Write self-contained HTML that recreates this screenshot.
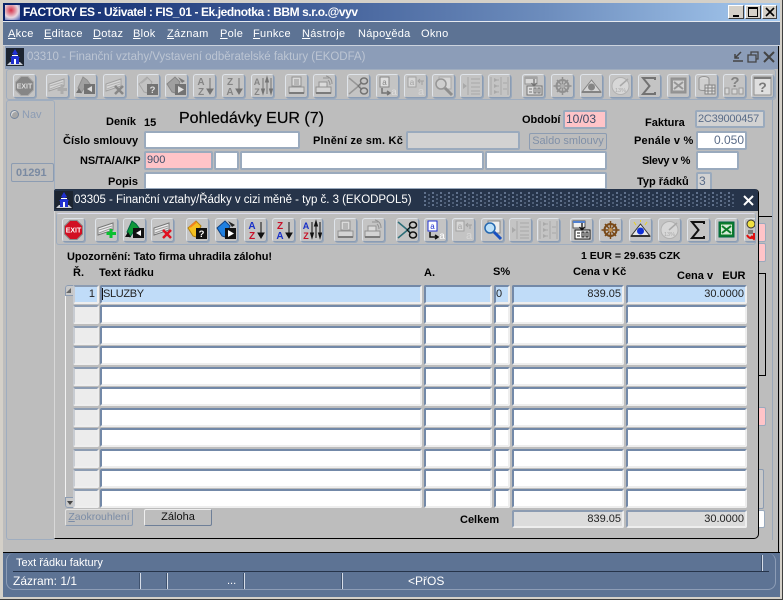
<!DOCTYPE html>
<html lang="cs">
<head>
<meta charset="utf-8">
<title>FACTORY ES</title>
<style>
html,body{margin:0;padding:0;width:783px;height:600px;overflow:hidden;background:#d4d0c8}
body{position:relative;font-family:"Liberation Sans",sans-serif;font-size:11px;color:#000}
div,span{box-sizing:border-box}
.a{position:absolute}
.t{position:absolute;white-space:nowrap;line-height:14px;height:14px}
.b{font-weight:bold}
.f{position:absolute;background:#fff;border:2px solid #9aaabd;border-radius:2px;color:#3c4c68;line-height:14px;font-size:12px;padding-left:1px;white-space:nowrap;overflow:hidden}
.d{background:#d2d2d2}
.p{background:#ffc4c8}
.btn{position:absolute;width:23px;height:24px;border:1px solid #8a9cb4;border-top-color:#dfe4ea;border-left-color:#dfe4ea;border-radius:3px;background:#c4c4c4;box-shadow:1px 1px 0 #9aa8ba}
.btn svg{position:absolute;left:0;top:0;width:21px;height:22px}
.off svg,.up svg{filter:grayscale(1) opacity(.45)}
.r{position:absolute;left:0;width:783px;height:19px}
.c{position:absolute;top:0;height:19px;background:#fff;border-top:2px solid #7389a8;border-left:2px solid #7389a8;border-right:2px solid #eee;border-bottom:2px solid #eee;border-radius:2px;font-size:11px;line-height:15px;color:#222;white-space:nowrap;overflow:hidden}
.c1{left:73px;width:26px;background:#ececec;border-top-color:#8c9cb2;border-left-color:#c8ccd2}
.c2{left:100px;width:322px}
.c3{left:424px;width:68px}
.c4{left:494px;width:16px}
.c5{left:512px;width:112px;text-align:right;padding-right:1px}
.c6{left:626px;width:121px;text-align:right;padding-right:1px}
.s .c{background:#c0dcf8}
.win{position:absolute;top:5px;width:16px;height:14px;background:#d4d0c8;border:1px solid;border-color:#fff #404040 #404040 #fff}
.sep{position:absolute;width:1px;top:573px;height:16px;background:#d6dde8;box-shadow:-1px 0 0 #3f526e}
</style>
</head>
<body>
<svg width="0" height="0" style="position:absolute">
<defs>
<symbol id="bld" viewBox="0 0 18 18"><rect width="18" height="18" fill="#1c2430"/><path d="M1 17 L4 14 H14 L17 17Z" fill="#c8ccd4"/><path d="M9 1 L12 6 H6Z" fill="#2030d0"/><path d="M9 5 L14 10 H4Z" fill="#2030d0"/><rect x="5" y="10" width="8" height="6" fill="#2030d0"/><rect x="8" y="11" width="2" height="5" fill="#fff"/><path d="M6 7.500 H12" stroke="#fff"/></symbol>
<symbol id="exit" viewBox="0 0 21 22"><path d="M7 1.500 H14 L19.500 7 V15 L14 20.500 H7 L1.500 15 V7Z" fill="#d20f22" stroke="#8a8a8a"/><text x="10.500" y="13.500" font-family="Liberation Sans" font-size="7" font-weight="bold" fill="#fff" text-anchor="middle">EXIT</text></symbol>
<symbol id="rib" viewBox="0 0 21 22"><path d="M2 9 L17 4 V11 L2 16Z" fill="#eee" stroke="#777"/><path d="M3 11 L16 7 M3 14 L16 9" stroke="#999"/></symbol>
<symbol id="add" viewBox="0 0 21 22"><use href="#rib"/><path d="M15 10 V19 M10.500 14.500 H20" stroke="#0ac030" stroke-width="3"/></symbol>
<symbol id="del" viewBox="0 0 21 22"><use href="#rib"/><path d="M11 11 L19 19 M19 11 L11 19" stroke="#e01020" stroke-width="2.500"/></symbol>
<symbol id="grn" viewBox="0 0 21 22"><path d="M3 13 L8 2 L12 5 L15 9 L10 12 L6 18Z" fill="#109838" stroke="#064"/><rect x="9" y="9" width="11" height="10" fill="#111"/><path d="M17 11 V17 L12 14Z" fill="#fff"/><path d="M1 18 H7 L4 13Z" fill="#111"/></symbol>
<symbol id="qry" viewBox="0 0 21 22"><path d="M1 9 L9 2 L14 7 L9 18 L6 17Z" fill="#f4c020" stroke="#b08010"/><path d="M3 8 L9 3" stroke="#f08020" stroke-width="2"/><rect x="9" y="9" width="11" height="11" fill="#111"/><text x="14.500" y="18" font-family="Liberation Sans" font-size="9.500" font-weight="bold" fill="#fff" text-anchor="middle">?</text></symbol>
<symbol id="run" viewBox="0 0 21 22"><path d="M1 9 L9 2 L14 7 L9 18 L6 17Z" fill="#2080e0" stroke="#104080"/><path d="M12 2 L19 6 L16 8Z" fill="#222"/><rect x="9" y="9" width="11" height="11" fill="#111"/><path d="M12 11 V18 L18 14.500Z" fill="#fff"/></symbol>
<symbol id="az" viewBox="0 0 21 22"><text x="7" y="10" font-family="Liberation Sans" font-size="10" font-weight="bold" fill="#1830c8" text-anchor="middle">A</text><text x="7" y="20" font-family="Liberation Sans" font-size="10" font-weight="bold" fill="#c81028" text-anchor="middle">Z</text><path d="M16 3 V16 M13 14 L16 19 L19 14Z" stroke="#111" fill="#111"/></symbol>
<symbol id="za" viewBox="0 0 21 22"><text x="7" y="10" font-family="Liberation Sans" font-size="10" font-weight="bold" fill="#c81028" text-anchor="middle">Z</text><text x="7" y="20" font-family="Liberation Sans" font-size="10" font-weight="bold" fill="#1830c8" text-anchor="middle">A</text><path d="M16 3 V16 M13 14 L16 19 L19 14Z" stroke="#111" fill="#111"/></symbol>
<symbol id="azz" viewBox="0 0 21 22"><text x="5" y="10" font-family="Liberation Sans" font-size="9" font-weight="bold" fill="#1830c8" text-anchor="middle">A</text><text x="5" y="20" font-family="Liberation Sans" font-size="9" font-weight="bold" fill="#c81028" text-anchor="middle">Z</text><path d="M11 3 V16 M15 6 V19 M19 3 V16 M9.500 14 L11 19 L12.500 14Z M13.500 7 L15 2 L16.500 7Z M17.500 14 L19 19 L20.500 14Z" stroke="#111" fill="#111"/></symbol>
<symbol id="pr" viewBox="0 0 21 22"><path d="M6 2 H15 V11 H6Z" fill="#f4f4f4" stroke="#555"/><path d="M8 5 H13 M8 7 H13 M8 9 H13" stroke="#555"/><path d="M3 12 H18 V18 H3Z" fill="#e8e8e8" stroke="#555"/><path d="M3 18 H18" stroke="#222" stroke-width="2"/></symbol>
<symbol id="pr2" viewBox="0 0 21 22"><path d="M5 7 H13 V12 H5Z" fill="#f4f4f4" stroke="#555"/><path d="M9 3 L15 3 M12 1 C16 2 18 5 18 9 M14 5 C15 6 16 8 16 10" stroke="#555" fill="none"/><path d="M2 12 H17 V18 H2Z" fill="#e8e8e8" stroke="#555"/><path d="M2 18 H17" stroke="#222" stroke-width="2"/></symbol>
<symbol id="cut" viewBox="0 0 21 22"><path d="M1 3 L13 13 M1 19 L13 9" stroke="#2c6e78" stroke-width="1.500" fill="none"/><ellipse cx="16" cy="6" rx="3.500" ry="3" fill="none" stroke="#111" stroke-width="1.500"/><ellipse cx="16" cy="16" rx="3.500" ry="3" fill="none" stroke="#111" stroke-width="1.500"/><path d="M13 8 L10 11 L13 14" stroke="#111" fill="none"/></symbol>
<symbol id="cp" viewBox="0 0 21 22"><rect x="3" y="2" width="9" height="10" fill="#fff" stroke="#2030d0"/><text x="7.500" y="10" font-family="Liberation Sans" font-size="8" fill="#2030d0" text-anchor="middle">a</text><path d="M5 13 V18 H12 M10 16 L13 18 L10 20" stroke="#111" stroke-width="1.500" fill="none"/><text x="17" y="20" font-family="Liberation Sans" font-size="10" fill="#fff" text-anchor="middle">a</text></symbol>
<symbol id="pa" viewBox="0 0 21 22"><rect x="3" y="2" width="8" height="10" fill="#eee" stroke="#777"/><text x="7" y="10" font-family="Liberation Sans" font-size="8" fill="#777" text-anchor="middle">a</text><path d="M13 6 H19 M15 4 L13 6 L15 8 M17 6 V10" stroke="#777" fill="none"/><text x="16" y="20" font-family="Liberation Sans" font-size="11" fill="#eee" text-anchor="middle">a</text></symbol>
<symbol id="fnd" viewBox="0 0 21 22"><path d="M6 2 H18 V14 H6Z" fill="#eee" stroke="#888"/><circle cx="8" cy="9" r="5" fill="#bde0f8" stroke="#2468b0" stroke-width="1.500"/><path d="M12 13 L19 20" stroke="#1850c0" stroke-width="3"/></symbol>
<symbol id="l1" viewBox="0 0 21 22"><path d="M7 2 V20" stroke="#888"/><path d="M10 4 H19 M10 8 H19 M10 12 H19 M10 16 H19 M10 19 H19" stroke="#888"/><path d="M2 8 L6 11 L2 14Z" fill="#888"/></symbol>
<symbol id="l2" viewBox="0 0 21 22"><path d="M2 2 V20 M12 2 V20 M19 2 V20" stroke="#888"/><path d="M5 5 H10 M5 11 H10 M5 17 H10 M14 8 H18 M14 14 H18" stroke="#888"/><path d="M5 3 L9 5 L5 7Z M5 9 L9 11 L5 13Z M5 15 L9 17 L5 19Z" fill="#888"/></symbol>
<symbol id="frm" viewBox="0 0 21 22"><rect x="2" y="2" width="12" height="7" fill="#f0f0f0" stroke="#555"/><path d="M2 3 H14" stroke="#5080d0" stroke-width="2"/><rect x="4" y="11" width="15" height="9" fill="#fff" stroke="#111"/><path d="M6 14 H9 M6 17 H9 M11 13 H13 V18 H11Z M15 13 H17 V18 H15Z" stroke="#111" fill="none"/><path d="M11 4 V10 M8.500 8 L11 11 L13.500 8" stroke="#111" fill="none" stroke-width="1.300"/></symbol>
<symbol id="wh" viewBox="0 0 21 22"><circle cx="10.500" cy="11" r="6" fill="none" stroke="#7a4a18" stroke-width="2"/><path d="M10.500 2 V20 M1.500 11 H19.500 M5 5 L16 17 M16 5 L5 17" stroke="#7a4a18" stroke-width="1.500"/><circle cx="10.500" cy="11" r="2" fill="#c09050"/></symbol>
<symbol id="eye" viewBox="0 0 21 22"><path d="M1 17 L10.500 5 L20 17Z" fill="#e8e8e8" stroke="#333"/><path d="M4 3 L6 6 M17 3 L15 6 M10.500 1 V3" stroke="#e8d020"/><circle cx="10.500" cy="12" r="3.500" fill="#1030d8"/><path d="M1 17 H20" stroke="#333" stroke-width="2"/></symbol>
<symbol id="dial" viewBox="0 0 21 22"><circle cx="10.500" cy="11" r="8.500" fill="#eee" stroke="#999"/><path d="M10 11 L18 4" stroke="#888" stroke-width="1.500"/><text x="10.500" y="17" font-family="Liberation Sans" font-size="5.500" fill="#888" text-anchor="middle">13%</text></symbol>
<symbol id="sig" viewBox="0 0 21 22"><path d="M16 5 V3 H4 L10.500 11 L4 19 H16 V17" fill="none" stroke="#111" stroke-width="2"/></symbol>
<symbol id="xl" viewBox="0 0 21 22"><rect x="3" y="3" width="15" height="15" fill="#0c7c28" stroke="#064"/><rect x="5" y="5.500" width="11" height="10" fill="#d8ecd8"/><path d="M6 7 L15 14 M15 7 L6 14" stroke="#0c7c28" stroke-width="2"/></symbol>
<symbol id="pers" viewBox="0 0 21 22"><circle cx="6" cy="5" r="4" fill="#f0e040" stroke="#333"/><path d="M3 12 H8 M3 14 H8" stroke="#333"/><path d="M2 16 C4 20 8 20 9 16 M9 14 V19 M6 17 L9 20 L11 17" stroke="#e01010" stroke-width="2" fill="none"/></symbol>
<symbol id="db" viewBox="0 0 21 22"><ellipse cx="8" cy="4" rx="5" ry="2.500" fill="#eee" stroke="#555"/><path d="M3 4 V14 C3 16 13 16 13 14 V4" fill="#ddd" stroke="#555"/><rect x="9" y="10" width="10" height="9" fill="#fff" stroke="#333"/><path d="M9 13 H19 M9 16 H19 M12 10 V19 M16 10 V19" stroke="#333"/></symbol>
<symbol id="qb" viewBox="0 0 21 22"><text x="11" y="12" font-family="Liberation Sans" font-size="15" font-weight="bold" fill="#333" text-anchor="middle">?</text><rect x="1" y="13" width="4" height="6" fill="#eee" stroke="#666"/><rect x="8" y="14" width="5" height="5" fill="#eee" stroke="#666"/><rect x="15" y="13" width="4" height="6" fill="#eee" stroke="#666"/></symbol>
<symbol id="hlp" viewBox="0 0 21 22"><rect x="2" y="2" width="17" height="18" fill="#fff" stroke="#555"/><path d="M2 3 H19" stroke="#222" stroke-width="2"/><text x="10.500" y="17" font-family="Liberation Sans" font-size="14" font-weight="bold" fill="#222" text-anchor="middle">?</text></symbol>
</defs>
</svg>

<!-- title bar -->
<div class="a" style="left:3px;top:3px;width:777px;height:18px;background:linear-gradient(90deg,#0a246a,#6d8dbd 70%,#a6caf0)"></div>
<div class="a" style="left:5px;top:5px;width:15px;height:15px;background:radial-gradient(circle at 40% 35%,#d83048,#e8d8e0 55%,#3858b0)"></div>
<div class="t b" style="left:23px;top:5px;color:#fff;font-size:12px;letter-spacing:-.42px">FACTORY ES - Uživatel : FIS_01 - Ek.jednotka : BBM s.r.o.@vyv</div>
<div class="win" style="left:728px;"><div class="a" style="left:4px;top:9px;width:6px;height:2px;background:#000"></div></div>
<div class="win" style="left:745px;"><div class="a" style="left:2px;top:1px;width:10px;height:10px;border:1px solid #000;border-top-width:2px"></div></div>
<div class="win" style="left:762px;width:15px"><svg class="a" style="left:2px;top:1px" width="10" height="10"><path d="M1 1 L9 9 M9 1 L1 9" stroke="#000" stroke-width="1.600"/></svg></div>

<!-- menu -->
<div class="a" style="left:3px;top:21px;width:777px;height:25px;background:#5d7394;border-top:1px solid #e6eaf0;border-bottom:1px solid #ccd3de"></div>
<div class="t" style="left:8px;top:27px;color:#fff;font-size:11px;letter-spacing:.3px"><u>A</u>kce</div>
<div class="t" style="left:44px;top:27px;color:#fff;font-size:11px;letter-spacing:.3px"><u>E</u>ditace</div>
<div class="t" style="left:93px;top:27px;color:#fff;font-size:11px;letter-spacing:.3px"><u>D</u>otaz</div>
<div class="t" style="left:133px;top:27px;color:#fff;font-size:11px;letter-spacing:.3px"><u>B</u>lok</div>
<div class="t" style="left:167px;top:27px;color:#fff;font-size:11px;letter-spacing:.3px"><u>Z</u>áznam</div>
<div class="t" style="left:220px;top:27px;color:#fff;font-size:11px;letter-spacing:.3px"><u>P</u>ole</div>
<div class="t" style="left:253px;top:27px;color:#fff;font-size:11px;letter-spacing:.3px"><u>F</u>unkce</div>
<div class="t" style="left:302px;top:27px;color:#fff;font-size:11px;letter-spacing:.3px"><u>N</u>ástroje</div>
<div class="t" style="left:358px;top:27px;color:#fff;font-size:11px;letter-spacing:.3px">Nápo<u>v</u>ěda</div>
<div class="t" style="left:421px;top:27px;color:#fff;font-size:11px;letter-spacing:.3px">Okno</div>

<!-- main area -->
<div class="a" style="left:3px;top:46px;width:777px;height:507px;background:#bdbdbd"></div>
<div class="a" style="left:5px;top:46px;width:773px;height:23px;background:#8c9db8"></div>
<svg class="a" style="left:6px;top:48px" width="18" height="18"><use href="#bld"/></svg>
<div class="t" style="left:27px;top:50px;color:#bcc5d3;font-size:11.500px;letter-spacing:-.03px">03310 - Finanční vztahy/Vystavení odběratelské faktury (EKODFA)</div>
<svg class="a" style="left:731px;top:50px" width="46" height="14"><path d="M2 11 H12 M10 2 L4 8 M4 4 V8 H8" stroke="#444" stroke-width="1.500" fill="none"/><path d="M17 5 H25 V12 H17Z M20 5 V2 H27 V9 H25" stroke="#444" fill="none" stroke-width="1.300"/><path d="M33 2 L43 12 M43 2 L33 12" stroke="#444" stroke-width="2"/></svg>
<div class="a" style="left:778px;top:46px;width:1px;height:507px;background:#000"></div>
<div class="a" style="left:772px;top:100px;width:1px;height:440px;background:#9aa8ba"></div>

<!-- upper toolbar -->
<div class="a" style="left:6px;top:69px;width:770px;height:31px;border:1px solid #9fadbf;border-radius:3px"></div>
<div class="btn up" style="left:13px;top:74px"><svg><use href="#exit"/></svg></div>
<div class="btn up" style="left:46px;top:74px"><svg><use href="#add"/></svg></div>
<div class="btn up" style="left:74px;top:74px"><svg><use href="#grn"/></svg></div>
<div class="btn up" style="left:103px;top:74px"><svg><use href="#del"/></svg></div>
<div class="btn up" style="left:137px;top:74px"><svg><use href="#qry"/></svg></div>
<div class="btn up" style="left:165px;top:74px"><svg><use href="#run"/></svg></div>
<div class="btn up" style="left:193px;top:74px"><svg><use href="#az"/></svg></div>
<div class="btn up" style="left:222px;top:74px"><svg><use href="#za"/></svg></div>
<div class="btn up" style="left:251px;top:74px"><svg><use href="#azz"/></svg></div>
<div class="btn up" style="left:285px;top:74px"><svg><use href="#pr"/></svg></div>
<div class="btn up" style="left:313px;top:74px"><svg><use href="#pr2"/></svg></div>
<div class="btn up" style="left:347px;top:74px"><svg><use href="#cut"/></svg></div>
<div class="btn up" style="left:376px;top:74px"><svg><use href="#cp"/></svg></div>
<div class="btn up" style="left:404px;top:74px"><svg><use href="#pa"/></svg></div>
<div class="btn up" style="left:432px;top:74px"><svg><use href="#fnd"/></svg></div>
<div class="btn up" style="left:460px;top:74px"><svg><use href="#l1"/></svg></div>
<div class="btn up" style="left:488px;top:74px"><svg><use href="#l2"/></svg></div>
<div class="btn up" style="left:522px;top:74px"><svg><use href="#frm"/></svg></div>
<div class="btn up" style="left:551px;top:74px"><svg><use href="#wh"/></svg></div>
<div class="btn up" style="left:580px;top:74px"><svg><use href="#eye"/></svg></div>
<div class="btn up" style="left:609px;top:74px"><svg><use href="#dial"/></svg></div>
<div class="btn up" style="left:638px;top:74px"><svg><use href="#sig"/></svg></div>
<div class="btn up" style="left:667px;top:74px"><svg><use href="#xl"/></svg></div>
<div class="btn up" style="left:695px;top:74px"><svg><use href="#db"/></svg></div>
<div class="btn up" style="left:723px;top:74px"><svg><use href="#qb"/></svg></div>
<div class="btn up" style="left:751px;top:74px"><svg><use href="#hlp"/></svg></div>

<!-- nav panel -->
<div class="a" style="left:6px;top:100px;width:49px;height:440px;border:1px solid #9fadbf;border-radius:3px"></div>
<div class="a" style="left:10px;top:110px;width:9px;height:9px;border-radius:50%;background:#a6a6a6;border:1px solid #74859c;box-shadow:inset 1px 1px 0 #ddd"></div>
<div class="t" style="left:22px;top:108px;color:#8c9cb4;font-size:11px">Nav</div>
<div class="a" style="left:11px;top:163px;width:43px;height:19px;border:1px solid #8c9cb2;border-radius:2px"></div>
<div class="t b" style="left:16px;top:166px;color:#7a8aa2;font-size:11px">01291</div>

<!-- upper form -->
<div class="t b" style="left:106px;top:115px">Deník</div>
<div class="t b" style="left:144px;top:116px">15</div>
<div class="t" style="left:179px;top:111px;font-size:16px;line-height:16px;height:18px;-webkit-text-stroke:.2px #000">Pohledávky EUR (7)</div>
<div class="t b" style="left:522px;top:113px">Období</div>
<div class="f p" style="left:563px;top:110px;width:44px;height:19px">10/03</div>
<div class="t b" style="left:645px;top:116px">Faktura</div>
<div class="f d" style="left:695px;top:110px;width:70px;height:18px;font-size:11px;color:#5a6c88;letter-spacing:-.2px">2C39000457</div>
<div class="t b" style="left:63px;top:134px;letter-spacing:.05px">Číslo smlouvy</div>
<div class="f" style="left:144px;top:131px;width:156px;height:18px"></div>
<div class="t b" style="left:313px;top:134px;letter-spacing:.2px">Plnění ze sm. Kč</div>
<div class="f d" style="left:406px;top:131px;width:114px;height:19px"></div>
<div class="a" style="left:529px;top:133px;width:78px;height:17px;border:1px solid #8c9cb2;border-radius:2px;color:#8090a8;text-align:center;line-height:15px;font-size:11px">Saldo smlouvy</div>
<div class="t b" style="left:634px;top:134px;letter-spacing:.2px">Penále v %</div>
<div class="f" style="left:696px;top:131px;width:51px;height:19px;text-align:right;color:#5a6c88;padding-right:1px">0.050</div>
<div class="t b" style="left:80px;top:154px;letter-spacing:-.1px">NS/TA/A/KP</div>
<div class="f p" style="left:144px;top:151px;width:69px;height:19px;font-size:11px">900</div>
<div class="f" style="left:214px;top:151px;width:25px;height:19px"></div>
<div class="f" style="left:240px;top:151px;width:244px;height:19px"></div>
<div class="f" style="left:485px;top:151px;width:122px;height:19px"></div>
<div class="t b" style="left:642px;top:154px;letter-spacing:-.3px">Slevy v %</div>
<div class="f" style="left:696px;top:151px;width:43px;height:19px"></div>
<div class="t b" style="left:108px;top:175px">Popis</div>
<div class="f" style="left:144px;top:172px;width:463px;height:18px"></div>
<div class="t b" style="left:637px;top:175px">Typ řádků</div>
<div class="f d" style="left:696px;top:172px;width:16px;height:19px;color:#5a6c88">3</div>

<!-- stuff to the right of dialog -->
<div class="a" style="left:758px;top:216px;width:14px;height:1px;background:#000"></div>
<div class="a" style="left:757px;top:223px;width:9px;height:19px;background:#ffc4c8;border:1px solid #9aaabd;border-radius:2px"></div>
<div class="a" style="left:757px;top:243px;width:9px;height:19px;background:#ffc4c8;border:1px solid #9aaabd;border-radius:2px"></div>
<div class="a" style="left:757px;top:273px;width:9px;height:103px;border:1px solid #000;border-left:0"></div>
<div class="a" style="left:757px;top:407px;width:9px;height:19px;background:#ffc4c8;border:1px solid #9aaabd;border-radius:2px"></div>
<div class="a" style="left:757px;top:469px;width:7px;height:40px;border:1px solid #8c9cb2;border-radius:2px;background:#c8c8c8"></div>
<div class="a" style="left:757px;top:510px;width:8px;height:18px;background:#fff;border:1px solid #9aaabd;border-radius:2px"></div>

<!-- dialog -->
<div class="a" style="left:54px;top:189px;width:705px;height:350px;background:#bdbdbd;border-right:1px solid #000;border-bottom:1px solid #000;border-left:1px solid #d8d8d8;border-radius:0 4px 5px 0"></div>
<div class="a" style="left:54px;top:189px;width:704px;height:22px;background:#26344a;border-radius:2px 3px 0 0"></div>
<div class="a" style="left:424px;top:192px;width:312px;height:15px;background-image:radial-gradient(circle at 1px 1px,#6a7c98 1px,transparent 1.100px),radial-gradient(circle at 5px 3px,#55667f 1px,transparent 1.100px);background-size:8px 4px"></div>
<svg class="a" style="left:55px;top:191px" width="18" height="18"><use href="#bld"/></svg>
<div class="t" style="left:74px;top:193px;color:#fff;font-size:11.500px;letter-spacing:-.03px">03305 - Finanční vztahy/Řádky v cizi měně - typ č. 3 (EKODPOL5)</div>
<svg class="a" style="left:743px;top:195px" width="11" height="11"><path d="M1 1 L10 10 M10 1 L1 10" stroke="#fff" stroke-width="2"/></svg>

<!-- dialog toolbar -->
<div class="a" style="left:56px;top:213px;width:700px;height:32px;border:1px solid #9fadbf;border-top-color:#dde;border-radius:3px"></div>
<div class="btn" style="left:62px;top:218px"><svg><use href="#exit"/></svg></div>
<div class="btn" style="left:95px;top:218px"><svg><use href="#add"/></svg></div>
<div class="btn" style="left:123px;top:218px"><svg><use href="#grn"/></svg></div>
<div class="btn" style="left:151px;top:218px"><svg><use href="#del"/></svg></div>
<div class="btn" style="left:186px;top:218px"><svg><use href="#qry"/></svg></div>
<div class="btn" style="left:215px;top:218px"><svg><use href="#run"/></svg></div>
<div class="btn" style="left:244px;top:218px"><svg><use href="#az"/></svg></div>
<div class="btn" style="left:272px;top:218px"><svg><use href="#za"/></svg></div>
<div class="btn" style="left:300px;top:218px"><svg><use href="#azz"/></svg></div>
<div class="btn off" style="left:334px;top:218px"><svg><use href="#pr"/></svg></div>
<div class="btn off" style="left:362px;top:218px"><svg><use href="#pr2"/></svg></div>
<div class="btn" style="left:396px;top:218px"><svg><use href="#cut"/></svg></div>
<div class="btn" style="left:424px;top:218px"><svg><use href="#cp"/></svg></div>
<div class="btn off" style="left:452px;top:218px"><svg><use href="#pa"/></svg></div>
<div class="btn" style="left:481px;top:218px"><svg><use href="#fnd"/></svg></div>
<div class="btn off" style="left:509px;top:218px"><svg><use href="#l1"/></svg></div>
<div class="btn off" style="left:537px;top:218px"><svg><use href="#l2"/></svg></div>
<div class="btn" style="left:570px;top:218px"><svg><use href="#frm"/></svg></div>
<div class="btn" style="left:599px;top:218px"><svg><use href="#wh"/></svg></div>
<div class="btn" style="left:629px;top:218px"><svg><use href="#eye"/></svg></div>
<div class="btn off" style="left:658px;top:218px"><svg><use href="#dial"/></svg></div>
<div class="btn" style="left:687px;top:218px"><svg><use href="#sig"/></svg></div>
<div class="btn" style="left:715px;top:218px"><svg><use href="#xl"/></svg></div>
<div class="btn" style="left:744px;top:218px;width:11px;border-right:0;overflow:hidden;border-radius:3px 0 0 3px"><svg><use href="#pers"/></svg></div>

<!-- dialog labels -->
<div class="t b" style="left:67px;top:250px;letter-spacing:-.05px">Upozornění: Tato firma uhradila zálohu!</div>
<div class="t b" style="left:581px;top:249px;font-size:10.500px">1 EUR = 29.635 CZK</div>
<div class="t b" style="left:73px;top:266px">Ř.</div>
<div class="t b" style="left:99px;top:266px">Text řádku</div>
<div class="t b" style="left:424px;top:266px">A.</div>
<div class="t b" style="left:493px;top:265px">S%</div>
<div class="t b" style="left:573px;top:265px">Cena v Kč</div>
<div class="t b" style="left:677px;top:269px;white-space:pre">Cena v   EUR</div>

<!-- scrollbar -->
<div class="a" style="left:65px;top:285px;width:8px;height:223px;background:#bdbdbd;border-left:1px solid #f2f2f2;border-radius:3px 0 0 3px"></div>
<div class="a" style="left:65px;top:285px;width:8px;height:11px;border:1px solid #8c9cb2;border-right:0;border-radius:3px 0 0 0;background:#c8c8c8"></div>
<div class="a" style="left:65px;top:497px;width:8px;height:11px;border:1px solid #8c9cb2;border-right:0;border-radius:0 0 0 3px;background:#c8c8c8"></div>
<svg class="a" style="left:66px;top:287px" width="7" height="7"><path d="M5 1 V6 H0Z" fill="#666"/></svg>
<svg class="a" style="left:67px;top:500px" width="7" height="6"><path d="M0 1 H6 L3 5Z" fill="#444"/></svg>

<!-- rows -->
<div class="r s" style="top:285px"><div class="c c1" style="text-align:right;padding-right:2px;background:#c0dcf8;border-top-color:#8c9cb2">1</div><div class="c c2"><span style="border-left:1px solid #111;letter-spacing:-.35px">SLUZBY</span></div><div class="c c3"></div><div class="c c4">0</div><div class="c c5">839.05</div><div class="c c6">30.0000</div></div>
<div class="r" style="top:305px"><div class="c c1"></div><div class="c c2"></div><div class="c c3"></div><div class="c c4"></div><div class="c c5"></div><div class="c c6"></div></div>
<div class="r" style="top:326px"><div class="c c1"></div><div class="c c2"></div><div class="c c3"></div><div class="c c4"></div><div class="c c5"></div><div class="c c6"></div></div>
<div class="r" style="top:346px"><div class="c c1"></div><div class="c c2"></div><div class="c c3"></div><div class="c c4"></div><div class="c c5"></div><div class="c c6"></div></div>
<div class="r" style="top:367px"><div class="c c1"></div><div class="c c2"></div><div class="c c3"></div><div class="c c4"></div><div class="c c5"></div><div class="c c6"></div></div>
<div class="r" style="top:387px"><div class="c c1"></div><div class="c c2"></div><div class="c c3"></div><div class="c c4"></div><div class="c c5"></div><div class="c c6"></div></div>
<div class="r" style="top:408px"><div class="c c1"></div><div class="c c2"></div><div class="c c3"></div><div class="c c4"></div><div class="c c5"></div><div class="c c6"></div></div>
<div class="r" style="top:428px"><div class="c c1"></div><div class="c c2"></div><div class="c c3"></div><div class="c c4"></div><div class="c c5"></div><div class="c c6"></div></div>
<div class="r" style="top:449px"><div class="c c1"></div><div class="c c2"></div><div class="c c3"></div><div class="c c4"></div><div class="c c5"></div><div class="c c6"></div></div>
<div class="r" style="top:469px"><div class="c c1"></div><div class="c c2"></div><div class="c c3"></div><div class="c c4"></div><div class="c c5"></div><div class="c c6"></div></div>
<div class="r" style="top:489px"><div class="c c1"></div><div class="c c2"></div><div class="c c3"></div><div class="c c4"></div><div class="c c5"></div><div class="c c6"></div></div>

<!-- bottom of dialog -->
<div class="a" style="left:65px;top:509px;width:68px;height:17px;border:1px solid #8c9cb2;border-top-color:#e4e4e4;border-left-color:#e4e4e4;border-radius:2px;color:#7b8ca6;text-align:center;line-height:15px;font-size:10.500px"><u>Z</u>aokrouhlení</div>
<div class="a" style="left:144px;top:509px;width:68px;height:17px;border:1px solid #6e7f98;border-top-color:#eee;border-left-color:#eee;border-radius:2px;text-align:center;line-height:15px;font-size:11px;color:#111">Záloha</div>
<div class="t b" style="left:460px;top:513px">Celkem</div>
<div class="c c5" style="top:510px;height:18px;background:#dcdcdc;border-top-color:#8c9cb2;border-left-color:#8c9cb2">839.05</div>
<div class="c c6" style="top:510px;height:18px;background:#dcdcdc;border-top-color:#8c9cb2;border-left-color:#8c9cb2">30.0000</div>

<!-- status -->
<div class="a" style="left:3px;top:552px;width:777px;height:45px;background:#5d7394;border-top:1px solid #000"></div>
<div class="a" style="left:6px;top:553px;width:770px;height:37px;border:1px solid #8d9db6;border-top:0;border-radius:8px"></div>
<div class="a" style="left:13px;top:571px;width:756px;height:1px;background:#26344a"></div>
<div class="t" style="left:16px;top:556px;color:#fff;font-size:11px">Text řádku faktury</div>
<div class="t" style="left:13px;top:574px;color:#fff;font-size:12px">Zázram: 1/1</div>
<div class="t" style="left:227px;top:574px;color:#fff;font-size:11px">...</div>
<div class="t" style="left:408px;top:574px;color:#fff;font-size:12px">&lt;PřOS</div>
<div class="sep" style="left:140px"></div>
<div class="sep" style="left:167px"></div>
<div class="sep" style="left:244px"></div>
<div class="sep" style="left:342px"></div>
<div class="sep" style="left:762px;top:555px"></div>
<div class="a" style="left:0;top:597px;width:783px;height:3px;background:#d4d0c8;border-bottom:1px solid #404040"></div>
<div class="a" style="left:782px;top:0;width:1px;height:600px;background:#404040"></div>
</body>
</html>
